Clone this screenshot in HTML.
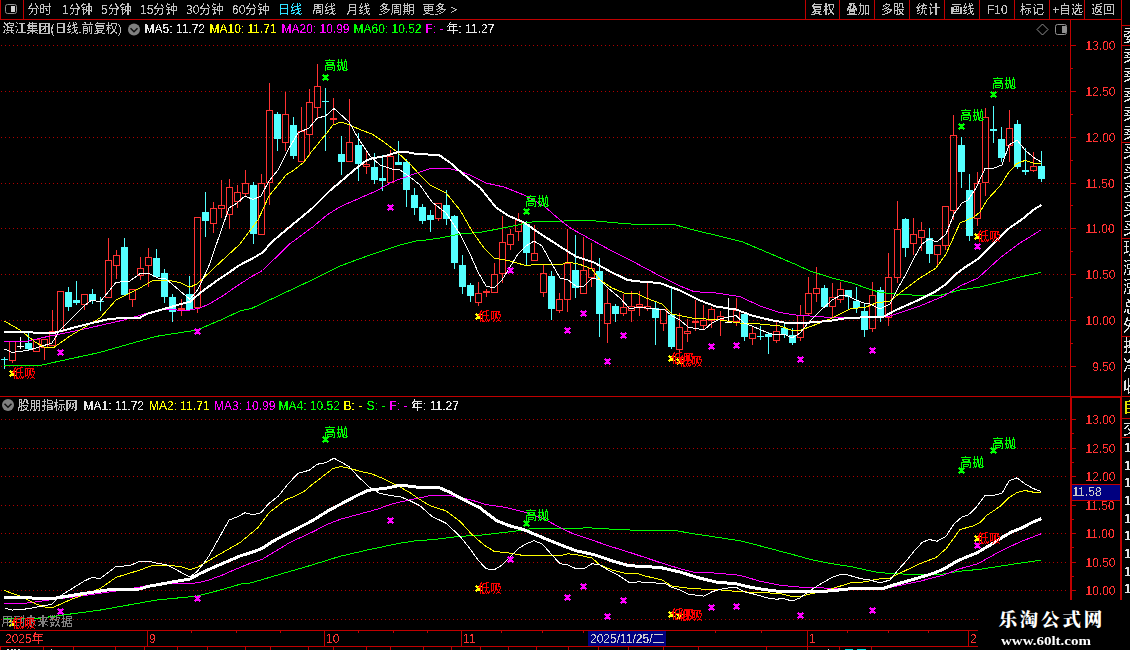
<!DOCTYPE html>
<html><head><meta charset="utf-8"><title>chart</title>
<style>
html,body{margin:0;padding:0;background:#000;}
body{width:1130px;height:650px;overflow:hidden;position:relative;font-family:"Liberation Sans","Noto Sans CJK SC",sans-serif;font-size:12px;}
.t{position:absolute;white-space:nowrap;line-height:15px;font-size:12px;}
.ax{left:1085.5px;color:#ff3232;}
svg{position:absolute;left:0;top:0;}
#sym{position:absolute;left:0;top:0;width:1130px;height:650px;filter:url(#thr2);}
#txt{position:absolute;left:0;top:0;width:1130px;height:650px;overflow:hidden;filter:url(#thr);}
#wm1{position:absolute;left:998.5px;top:606px;color:#fff;font-weight:900;font-size:18.5px;letter-spacing:2.8px;line-height:28px;font-family:"Liberation Serif","Noto Serif CJK SC",serif;white-space:nowrap;}
#wm2{position:absolute;left:1001px;top:632.5px;transform:scale(1,0.82);transform-origin:0 0;color:#fff;font-weight:bold;font-size:15px;line-height:20px;font-family:"Liberation Serif",serif;white-space:nowrap;}
#strip{position:absolute;left:1122px;top:19px;width:8px;height:631px;overflow:hidden;}
</style></head><body>
<svg width="1130" height="650" viewBox="0 0 1130 650" shape-rendering="crispEdges">
<line x1="1" y1="45.5" x2="1067" y2="45.5" stroke="#b00000" stroke-width="1" stroke-dasharray="1 3"/>
<line x1="1" y1="91.5" x2="1067" y2="91.5" stroke="#b00000" stroke-width="1" stroke-dasharray="1 3"/>
<line x1="1" y1="137.5" x2="1067" y2="137.5" stroke="#b00000" stroke-width="1" stroke-dasharray="1 3"/>
<line x1="1" y1="183.5" x2="1067" y2="183.5" stroke="#b00000" stroke-width="1" stroke-dasharray="1 3"/>
<line x1="1" y1="228.5" x2="1067" y2="228.5" stroke="#b00000" stroke-width="1" stroke-dasharray="1 3"/>
<line x1="1" y1="274.5" x2="1067" y2="274.5" stroke="#b00000" stroke-width="1" stroke-dasharray="1 3"/>
<line x1="1" y1="320.5" x2="1067" y2="320.5" stroke="#b00000" stroke-width="1" stroke-dasharray="1 3"/>
<line x1="1" y1="366.5" x2="1067" y2="366.5" stroke="#b00000" stroke-width="1" stroke-dasharray="1 3"/>
<line x1="1" y1="419.5" x2="1068" y2="419.5" stroke="#b00000" stroke-width="1" stroke-dasharray="1 3"/>
<line x1="1" y1="448.5" x2="1068" y2="448.5" stroke="#b00000" stroke-width="1" stroke-dasharray="1 3"/>
<line x1="1" y1="476.5" x2="1068" y2="476.5" stroke="#b00000" stroke-width="1" stroke-dasharray="1 3"/>
<line x1="1" y1="505.5" x2="1068" y2="505.5" stroke="#b00000" stroke-width="1" stroke-dasharray="1 3"/>
<line x1="1" y1="533.5" x2="1068" y2="533.5" stroke="#b00000" stroke-width="1" stroke-dasharray="1 3"/>
<line x1="1" y1="562.5" x2="1068" y2="562.5" stroke="#b00000" stroke-width="1" stroke-dasharray="1 3"/>
<line x1="1" y1="590.5" x2="1068" y2="590.5" stroke="#b00000" stroke-width="1" stroke-dasharray="1 3"/>
<line x1="1" y1="619.5" x2="978" y2="619.5" stroke="#b00000" stroke-width="1" stroke-dasharray="1 3"/>
<rect x="0" y="19" width="1122" height="1" fill="#c00000"/>
<rect x="0" y="0" width="1" height="20" fill="#c00000"/>
<rect x="23" y="0" width="1" height="20" fill="#c00000"/>
<rect x="805" y="0" width="1" height="19" fill="#c00000"/>
<rect x="839" y="0" width="1" height="19" fill="#c00000"/>
<rect x="874" y="0" width="1" height="19" fill="#c00000"/>
<rect x="909" y="0" width="1" height="19" fill="#c00000"/>
<rect x="944" y="0" width="1" height="19" fill="#c00000"/>
<rect x="979" y="0" width="1" height="19" fill="#c00000"/>
<rect x="1014" y="0" width="1" height="19" fill="#c00000"/>
<rect x="1049" y="0" width="1" height="19" fill="#c00000"/>
<rect x="1084" y="0" width="1" height="19" fill="#c00000"/>
<rect x="1121" y="0" width="1" height="397" fill="#c00000"/>
<rect x="1070" y="20" width="1" height="377" fill="#c00000"/>
<rect x="0" y="396" width="1130" height="1" fill="#c00000"/>
<rect x="1070" y="396" width="2" height="204" fill="#c00000"/>
<rect x="1120" y="396" width="2" height="204" fill="#c00000"/>
<rect x="1070" y="396" width="52" height="2" fill="#c00000"/>
<rect x="0" y="630" width="978" height="1" fill="#c00000"/>
<rect x="0" y="646" width="978" height="1" fill="#c00000"/>
<rect x="1071" y="45" width="5" height="1" fill="#c00000"/>
<rect x="1071" y="68" width="2" height="1" fill="#c00000"/>
<rect x="1071" y="91" width="5" height="1" fill="#c00000"/>
<rect x="1071" y="114" width="2" height="1" fill="#c00000"/>
<rect x="1071" y="137" width="5" height="1" fill="#c00000"/>
<rect x="1071" y="160" width="2" height="1" fill="#c00000"/>
<rect x="1071" y="183" width="5" height="1" fill="#c00000"/>
<rect x="1071" y="205" width="2" height="1" fill="#c00000"/>
<rect x="1071" y="228" width="5" height="1" fill="#c00000"/>
<rect x="1071" y="251" width="2" height="1" fill="#c00000"/>
<rect x="1071" y="274" width="5" height="1" fill="#c00000"/>
<rect x="1071" y="297" width="2" height="1" fill="#c00000"/>
<rect x="1071" y="320" width="5" height="1" fill="#c00000"/>
<rect x="1071" y="343" width="2" height="1" fill="#c00000"/>
<rect x="1071" y="366" width="5" height="1" fill="#c00000"/>
<rect x="1072" y="419" width="4" height="1" fill="#c00000"/>
<rect x="1072" y="433" width="2" height="1" fill="#c00000"/>
<rect x="1072" y="448" width="4" height="1" fill="#c00000"/>
<rect x="1072" y="462" width="2" height="1" fill="#c00000"/>
<rect x="1072" y="476" width="4" height="1" fill="#c00000"/>
<rect x="1072" y="490" width="2" height="1" fill="#c00000"/>
<rect x="1072" y="505" width="4" height="1" fill="#c00000"/>
<rect x="1072" y="519" width="2" height="1" fill="#c00000"/>
<rect x="1072" y="533" width="4" height="1" fill="#c00000"/>
<rect x="1072" y="547" width="2" height="1" fill="#c00000"/>
<rect x="1072" y="562" width="4" height="1" fill="#c00000"/>
<rect x="1072" y="576" width="2" height="1" fill="#c00000"/>
<rect x="1072" y="590" width="4" height="1" fill="#c00000"/>
<rect x="147" y="630" width="1" height="17" fill="#c00000"/>
<rect x="324" y="630" width="1" height="17" fill="#c00000"/>
<rect x="461" y="630" width="1" height="17" fill="#c00000"/>
<rect x="807" y="630" width="1" height="17" fill="#c00000"/>
<rect x="968" y="630" width="1" height="17" fill="#c00000"/>
<rect x="191" y="631" width="1" height="2" fill="#c00000"/>
<rect x="236" y="631" width="1" height="2" fill="#c00000"/>
<rect x="280" y="631" width="1" height="2" fill="#c00000"/>
<rect x="358" y="631" width="1" height="2" fill="#c00000"/>
<rect x="393" y="631" width="1" height="2" fill="#c00000"/>
<rect x="427" y="631" width="1" height="2" fill="#c00000"/>
<rect x="501" y="631" width="1" height="2" fill="#c00000"/>
<rect x="542" y="631" width="1" height="2" fill="#c00000"/>
<rect x="583" y="631" width="1" height="2" fill="#c00000"/>
<rect x="715" y="631" width="1" height="2" fill="#c00000"/>
<rect x="761" y="631" width="1" height="2" fill="#c00000"/>
<rect x="847" y="631" width="1" height="2" fill="#c00000"/>
<rect x="888" y="631" width="1" height="2" fill="#c00000"/>
<rect x="928" y="631" width="1" height="2" fill="#c00000"/>
<rect x="43" y="647" width="1" height="3" fill="#c00000"/>
<rect x="73" y="647" width="1" height="3" fill="#c00000"/>
<rect x="115" y="647" width="1" height="3" fill="#c00000"/>
<rect x="144" y="647" width="1" height="3" fill="#c00000"/>
<rect x="177" y="647" width="1" height="3" fill="#c00000"/>
<rect x="207" y="647" width="1" height="3" fill="#c00000"/>
<rect x="245" y="647" width="1" height="3" fill="#c00000"/>
<rect x="270" y="647" width="1" height="3" fill="#c00000"/>
<rect x="308" y="647" width="1" height="3" fill="#c00000"/>
<rect x="333" y="647" width="1" height="3" fill="#c00000"/>
<rect x="366" y="647" width="1" height="3" fill="#c00000"/>
<rect x="390" y="647" width="1" height="3" fill="#c00000"/>
<rect x="423" y="647" width="1" height="3" fill="#c00000"/>
<rect x="451" y="647" width="1" height="3" fill="#c00000"/>
<rect x="480" y="647" width="1" height="3" fill="#c00000"/>
<rect x="508" y="647" width="1" height="3" fill="#c00000"/>
<rect x="536" y="647" width="1" height="3" fill="#c00000"/>
<rect x="568" y="647" width="1" height="3" fill="#c00000"/>
<rect x="598" y="647" width="1" height="3" fill="#c00000"/>
<rect x="628" y="647" width="1" height="3" fill="#c00000"/>
<rect x="663" y="647" width="1" height="3" fill="#c00000"/>
<rect x="698" y="647" width="1" height="3" fill="#c00000"/>
<rect x="766" y="647" width="1" height="3" fill="#c00000"/>
<rect x="807" y="647" width="1" height="3" fill="#c00000"/>
<rect x="839" y="647" width="1" height="3" fill="#c00000"/>
<rect x="871" y="647" width="1" height="3" fill="#c00000"/>
<rect x="0" y="647" width="1" height="3" fill="#c00000"/>
<rect x="7" y="649" width="1" height="1" fill="#e0e0e0"/>
<rect x="8" y="649" width="1" height="1" fill="#e0e0e0"/>
<rect x="11" y="649" width="1" height="1" fill="#e0e0e0"/>
<rect x="12" y="649" width="1" height="1" fill="#e0e0e0"/>
<rect x="14" y="649" width="1" height="1" fill="#e0e0e0"/>
<rect x="15" y="649" width="1" height="1" fill="#e0e0e0"/>
<rect x="18" y="649" width="1" height="1" fill="#e0e0e0"/>
<rect x="19" y="649" width="1" height="1" fill="#e0e0e0"/>
<rect x="51" y="649" width="1" height="1" fill="#e0e0e0"/>
<rect x="828" y="649" width="1" height="1" fill="#e0e0e0"/>
<rect x="845" y="649" width="8" height="1" fill="#00e0e0"/>
<rect x="857" y="649" width="9" height="1" fill="#00e0e0"/>
<rect x="1122" y="25" width="8" height="1" fill="#c00000"/>
<rect x="1122" y="45" width="8" height="1" fill="#c00000"/>
<rect x="1122" y="142" width="8" height="1" fill="#c00000"/>
<rect x="1122" y="238" width="8" height="1" fill="#c00000"/>
<rect x="1122" y="336" width="8" height="1" fill="#c00000"/>
<rect x="1122" y="418" width="8" height="1" fill="#c00000"/>
<rect x="1122" y="437" width="8" height="1" fill="#c00000"/>
<rect x="4" y="357" width="1" height="12" fill="#54ffff"/>
<rect x="1" y="359" width="7" height="1" fill="#54ffff"/>
<rect x="12" y="361" width="1" height="2" fill="#ff3232"/>
<rect x="9.5" y="341.5" width="6" height="19" fill="none" stroke="#ff3232" stroke-width="1"/>
<rect x="20" y="337" width="1" height="12" fill="#ffffff"/>
<rect x="17" y="346" width="7" height="1" fill="#ffffff"/>
<rect x="28" y="333" width="1" height="17" fill="#54ffff"/>
<rect x="25" y="343" width="7" height="6" fill="#54ffff"/>
<rect x="33.5" y="339.5" width="6" height="12" fill="none" stroke="#ff3232" stroke-width="1"/>
<rect x="44" y="348" width="1" height="12" fill="#ff3232"/>
<rect x="41.5" y="339.5" width="6" height="8" fill="none" stroke="#ff3232" stroke-width="1"/>
<rect x="52" y="310" width="1" height="21" fill="#ff3232"/>
<rect x="49.5" y="331.5" width="6" height="14" fill="none" stroke="#ff3232" stroke-width="1"/>
<rect x="57.5" y="291.5" width="6" height="40" fill="none" stroke="#ff3232" stroke-width="1"/>
<rect x="68" y="287" width="1" height="24" fill="#54ffff"/>
<rect x="65" y="292" width="7" height="15" fill="#54ffff"/>
<rect x="76" y="281" width="1" height="24" fill="#54ffff"/>
<rect x="73" y="300" width="7" height="3" fill="#54ffff"/>
<rect x="84" y="305" width="1" height="5" fill="#ff3232"/>
<rect x="81.5" y="294.5" width="6" height="10" fill="none" stroke="#ff3232" stroke-width="1"/>
<rect x="92" y="289" width="1" height="15" fill="#54ffff"/>
<rect x="89" y="294" width="7" height="7" fill="#54ffff"/>
<rect x="100" y="297" width="1" height="14" fill="#54ffff"/>
<rect x="97" y="301" width="7" height="1" fill="#54ffff"/>
<rect x="108" y="238" width="1" height="22" fill="#ff3232"/>
<rect x="105.5" y="260.5" width="6" height="37" fill="none" stroke="#ff3232" stroke-width="1"/>
<rect x="116" y="250" width="1" height="5" fill="#ff3232"/>
<rect x="116" y="266" width="1" height="13" fill="#ff3232"/>
<rect x="113.5" y="255.5" width="6" height="10" fill="none" stroke="#ff3232" stroke-width="1"/>
<rect x="124" y="238" width="1" height="57" fill="#54ffff"/>
<rect x="121" y="247" width="7" height="48" fill="#54ffff"/>
<rect x="132" y="300" width="1" height="7" fill="#ff3232"/>
<rect x="129.5" y="289.5" width="6" height="10" fill="none" stroke="#ff3232" stroke-width="1"/>
<rect x="140" y="257" width="1" height="11" fill="#ff3232"/>
<rect x="140" y="276" width="1" height="4" fill="#ff3232"/>
<rect x="137.5" y="268.5" width="6" height="7" fill="none" stroke="#ff3232" stroke-width="1"/>
<rect x="148" y="248" width="1" height="9" fill="#ff3232"/>
<rect x="148" y="266" width="1" height="21" fill="#ff3232"/>
<rect x="145.5" y="257.5" width="6" height="8" fill="none" stroke="#ff3232" stroke-width="1"/>
<rect x="156" y="249" width="1" height="28" fill="#54ffff"/>
<rect x="153" y="258" width="7" height="19" fill="#54ffff"/>
<rect x="164" y="269" width="1" height="34" fill="#54ffff"/>
<rect x="161" y="273" width="7" height="24" fill="#54ffff"/>
<rect x="172" y="294" width="1" height="28" fill="#54ffff"/>
<rect x="169" y="297" width="7" height="15" fill="#54ffff"/>
<rect x="181" y="299" width="1" height="9" fill="#ff3232"/>
<rect x="181" y="310" width="1" height="6" fill="#ff3232"/>
<rect x="178" y="308" width="7" height="2" fill="#ff3232"/>
<rect x="189" y="276" width="1" height="34" fill="#54ffff"/>
<rect x="186" y="294" width="7" height="16" fill="#54ffff"/>
<rect x="197" y="308" width="1" height="5" fill="#ff3232"/>
<rect x="194.5" y="217.5" width="6" height="90" fill="none" stroke="#ff3232" stroke-width="1"/>
<rect x="205" y="192" width="1" height="45" fill="#54ffff"/>
<rect x="202" y="212" width="7" height="9" fill="#54ffff"/>
<rect x="213" y="202" width="1" height="6" fill="#ff3232"/>
<rect x="213" y="224" width="1" height="9" fill="#ff3232"/>
<rect x="210.5" y="208.5" width="6" height="15" fill="none" stroke="#ff3232" stroke-width="1"/>
<rect x="221" y="180" width="1" height="25" fill="#ff3232"/>
<rect x="221" y="209" width="1" height="9" fill="#ff3232"/>
<rect x="218.5" y="205.5" width="6" height="3" fill="none" stroke="#ff3232" stroke-width="1"/>
<rect x="229" y="179" width="1" height="8" fill="#ff3232"/>
<rect x="229" y="215" width="1" height="14" fill="#ff3232"/>
<rect x="226.5" y="187.5" width="6" height="27" fill="none" stroke="#ff3232" stroke-width="1"/>
<rect x="237" y="185" width="1" height="7" fill="#ff3232"/>
<rect x="237" y="202" width="1" height="6" fill="#ff3232"/>
<rect x="234.5" y="192.5" width="6" height="9" fill="none" stroke="#ff3232" stroke-width="1"/>
<rect x="245" y="170" width="1" height="13" fill="#ff3232"/>
<rect x="245" y="194" width="1" height="3" fill="#ff3232"/>
<rect x="242.5" y="183.5" width="6" height="10" fill="none" stroke="#ff3232" stroke-width="1"/>
<rect x="253" y="182" width="1" height="62" fill="#54ffff"/>
<rect x="250" y="185" width="7" height="49" fill="#54ffff"/>
<rect x="261" y="174" width="1" height="9" fill="#ff3232"/>
<rect x="258.5" y="183.5" width="6" height="51" fill="none" stroke="#ff3232" stroke-width="1"/>
<rect x="269" y="83" width="1" height="27" fill="#ff3232"/>
<rect x="269" y="183" width="1" height="22" fill="#ff3232"/>
<rect x="266.5" y="110.5" width="6" height="72" fill="none" stroke="#ff3232" stroke-width="1"/>
<rect x="277" y="112" width="1" height="39" fill="#54ffff"/>
<rect x="274" y="114" width="7" height="25" fill="#54ffff"/>
<rect x="285" y="92" width="1" height="22" fill="#ff3232"/>
<rect x="285" y="143" width="1" height="8" fill="#ff3232"/>
<rect x="282.5" y="114.5" width="6" height="28" fill="none" stroke="#ff3232" stroke-width="1"/>
<rect x="293" y="117" width="1" height="42" fill="#54ffff"/>
<rect x="290" y="125" width="7" height="31" fill="#54ffff"/>
<rect x="301" y="107" width="1" height="24" fill="#ff3232"/>
<rect x="298.5" y="131.5" width="6" height="30" fill="none" stroke="#ff3232" stroke-width="1"/>
<rect x="309" y="89" width="1" height="13" fill="#ff3232"/>
<rect x="309" y="135" width="1" height="21" fill="#ff3232"/>
<rect x="306.5" y="102.5" width="6" height="32" fill="none" stroke="#ff3232" stroke-width="1"/>
<rect x="317" y="64" width="1" height="22" fill="#ff3232"/>
<rect x="317" y="108" width="1" height="11" fill="#ff3232"/>
<rect x="314.5" y="86.5" width="6" height="21" fill="none" stroke="#ff3232" stroke-width="1"/>
<rect x="325" y="88" width="1" height="63" fill="#54ffff"/>
<rect x="322" y="101" width="7" height="1" fill="#54ffff"/>
<rect x="333" y="98" width="1" height="20" fill="#ff3232"/>
<rect x="333" y="120" width="1" height="4" fill="#ff3232"/>
<rect x="330" y="118" width="7" height="2" fill="#ff3232"/>
<rect x="341" y="136" width="1" height="39" fill="#54ffff"/>
<rect x="338" y="154" width="7" height="8" fill="#54ffff"/>
<rect x="349" y="99" width="1" height="43" fill="#ff3232"/>
<rect x="346.5" y="142.5" width="6" height="19" fill="none" stroke="#ff3232" stroke-width="1"/>
<rect x="358" y="133" width="1" height="48" fill="#54ffff"/>
<rect x="355" y="145" width="7" height="19" fill="#54ffff"/>
<rect x="366" y="152" width="1" height="12" fill="#ff3232"/>
<rect x="366" y="167" width="1" height="7" fill="#ff3232"/>
<rect x="363.5" y="164.5" width="6" height="2" fill="none" stroke="#ff3232" stroke-width="1"/>
<rect x="374" y="153" width="1" height="31" fill="#54ffff"/>
<rect x="371" y="167" width="7" height="13" fill="#54ffff"/>
<rect x="382" y="155" width="1" height="36" fill="#54ffff"/>
<rect x="379" y="178" width="7" height="3" fill="#54ffff"/>
<rect x="390" y="150" width="1" height="6" fill="#ff3232"/>
<rect x="387.5" y="156.5" width="6" height="26" fill="none" stroke="#ff3232" stroke-width="1"/>
<rect x="398" y="141" width="1" height="24" fill="#54ffff"/>
<rect x="395" y="162" width="7" height="3" fill="#54ffff"/>
<rect x="406" y="159" width="1" height="48" fill="#54ffff"/>
<rect x="403" y="162" width="7" height="28" fill="#54ffff"/>
<rect x="414" y="188" width="1" height="27" fill="#54ffff"/>
<rect x="411" y="195" width="7" height="13" fill="#54ffff"/>
<rect x="422" y="204" width="1" height="20" fill="#54ffff"/>
<rect x="419" y="207" width="7" height="14" fill="#54ffff"/>
<rect x="430" y="210" width="1" height="22" fill="#54ffff"/>
<rect x="427" y="215" width="7" height="5" fill="#54ffff"/>
<rect x="438" y="219" width="1" height="2" fill="#ff3232"/>
<rect x="435.5" y="203.5" width="6" height="15" fill="none" stroke="#ff3232" stroke-width="1"/>
<rect x="446" y="190" width="1" height="35" fill="#54ffff"/>
<rect x="443" y="205" width="7" height="14" fill="#54ffff"/>
<rect x="454" y="215" width="1" height="54" fill="#54ffff"/>
<rect x="451" y="216" width="7" height="47" fill="#54ffff"/>
<rect x="462" y="255" width="1" height="39" fill="#54ffff"/>
<rect x="459" y="265" width="7" height="22" fill="#54ffff"/>
<rect x="470" y="283" width="1" height="19" fill="#54ffff"/>
<rect x="467" y="285" width="7" height="11" fill="#54ffff"/>
<rect x="478" y="282" width="1" height="11" fill="#ff3232"/>
<rect x="478" y="303" width="1" height="3" fill="#ff3232"/>
<rect x="475.5" y="293.5" width="6" height="9" fill="none" stroke="#ff3232" stroke-width="1"/>
<rect x="486" y="289" width="1" height="2" fill="#ff3232"/>
<rect x="486" y="293" width="1" height="4" fill="#ff3232"/>
<rect x="483" y="291" width="7" height="2" fill="#ff3232"/>
<rect x="494" y="263" width="1" height="11" fill="#ff3232"/>
<rect x="491.5" y="274.5" width="6" height="18" fill="none" stroke="#ff3232" stroke-width="1"/>
<rect x="502" y="216" width="1" height="26" fill="#ff3232"/>
<rect x="502" y="274" width="1" height="9" fill="#ff3232"/>
<rect x="499.5" y="242.5" width="6" height="31" fill="none" stroke="#ff3232" stroke-width="1"/>
<rect x="510" y="229" width="1" height="5" fill="#ff3232"/>
<rect x="510" y="245" width="1" height="5" fill="#ff3232"/>
<rect x="507.5" y="234.5" width="6" height="10" fill="none" stroke="#ff3232" stroke-width="1"/>
<rect x="518" y="213" width="1" height="7" fill="#ff3232"/>
<rect x="518" y="232" width="1" height="9" fill="#ff3232"/>
<rect x="515.5" y="220.5" width="6" height="11" fill="none" stroke="#ff3232" stroke-width="1"/>
<rect x="526" y="221" width="1" height="44" fill="#54ffff"/>
<rect x="523" y="224" width="7" height="29" fill="#54ffff"/>
<rect x="534" y="225" width="1" height="28" fill="#ff3232"/>
<rect x="531.5" y="253.5" width="6" height="7" fill="none" stroke="#ff3232" stroke-width="1"/>
<rect x="543" y="264" width="1" height="9" fill="#ff3232"/>
<rect x="543" y="293" width="1" height="4" fill="#ff3232"/>
<rect x="540.5" y="273.5" width="6" height="19" fill="none" stroke="#ff3232" stroke-width="1"/>
<rect x="551" y="271" width="1" height="49" fill="#54ffff"/>
<rect x="548" y="276" width="7" height="33" fill="#54ffff"/>
<rect x="559" y="293" width="1" height="6" fill="#ff3232"/>
<rect x="559" y="311" width="1" height="2" fill="#ff3232"/>
<rect x="556.5" y="299.5" width="6" height="11" fill="none" stroke="#ff3232" stroke-width="1"/>
<rect x="567" y="229" width="1" height="34" fill="#ff3232"/>
<rect x="567" y="300" width="1" height="12" fill="#ff3232"/>
<rect x="564.5" y="263.5" width="6" height="36" fill="none" stroke="#ff3232" stroke-width="1"/>
<rect x="575" y="235" width="1" height="63" fill="#54ffff"/>
<rect x="572" y="270" width="7" height="18" fill="#54ffff"/>
<rect x="583" y="237" width="1" height="33" fill="#ff3232"/>
<rect x="580.5" y="270.5" width="6" height="23" fill="none" stroke="#ff3232" stroke-width="1"/>
<rect x="591" y="243" width="1" height="25" fill="#ff3232"/>
<rect x="591" y="278" width="1" height="9" fill="#ff3232"/>
<rect x="588.5" y="268.5" width="6" height="9" fill="none" stroke="#ff3232" stroke-width="1"/>
<rect x="599" y="258" width="1" height="79" fill="#54ffff"/>
<rect x="596" y="271" width="7" height="43" fill="#54ffff"/>
<rect x="607" y="289" width="1" height="14" fill="#ff3232"/>
<rect x="607" y="324" width="1" height="19" fill="#ff3232"/>
<rect x="604.5" y="303.5" width="6" height="20" fill="none" stroke="#ff3232" stroke-width="1"/>
<rect x="615" y="304" width="1" height="18" fill="#54ffff"/>
<rect x="612" y="306" width="7" height="8" fill="#54ffff"/>
<rect x="623" y="294" width="1" height="13" fill="#ff3232"/>
<rect x="623" y="314" width="1" height="2" fill="#ff3232"/>
<rect x="620.5" y="307.5" width="6" height="6" fill="none" stroke="#ff3232" stroke-width="1"/>
<rect x="631" y="291" width="1" height="15" fill="#ff3232"/>
<rect x="631" y="311" width="1" height="11" fill="#ff3232"/>
<rect x="628.5" y="306.5" width="6" height="4" fill="none" stroke="#ff3232" stroke-width="1"/>
<rect x="639" y="291" width="1" height="13" fill="#ff3232"/>
<rect x="639" y="307" width="1" height="9" fill="#ff3232"/>
<rect x="636.5" y="304.5" width="6" height="2" fill="none" stroke="#ff3232" stroke-width="1"/>
<rect x="647" y="281" width="1" height="25" fill="#ff3232"/>
<rect x="647" y="309" width="1" height="2" fill="#ff3232"/>
<rect x="644.5" y="306.5" width="6" height="2" fill="none" stroke="#ff3232" stroke-width="1"/>
<rect x="655" y="302" width="1" height="43" fill="#54ffff"/>
<rect x="652" y="308" width="7" height="10" fill="#54ffff"/>
<rect x="663" y="324" width="1" height="7" fill="#ff3232"/>
<rect x="660.5" y="309.5" width="6" height="14" fill="none" stroke="#ff3232" stroke-width="1"/>
<rect x="671" y="288" width="1" height="61" fill="#54ffff"/>
<rect x="668" y="315" width="7" height="32" fill="#54ffff"/>
<rect x="679" y="313" width="1" height="14" fill="#ff3232"/>
<rect x="679" y="350" width="1" height="3" fill="#ff3232"/>
<rect x="676.5" y="327.5" width="6" height="22" fill="none" stroke="#ff3232" stroke-width="1"/>
<rect x="687" y="319" width="1" height="12" fill="#ff3232"/>
<rect x="687" y="334" width="1" height="8" fill="#ff3232"/>
<rect x="684.5" y="331.5" width="6" height="2" fill="none" stroke="#ff3232" stroke-width="1"/>
<rect x="695" y="300" width="1" height="21" fill="#ff3232"/>
<rect x="695" y="323" width="1" height="8" fill="#ff3232"/>
<rect x="692" y="321" width="7" height="2" fill="#ff3232"/>
<rect x="703" y="305" width="1" height="15" fill="#ff3232"/>
<rect x="703" y="326" width="1" height="4" fill="#ff3232"/>
<rect x="700.5" y="320.5" width="6" height="5" fill="none" stroke="#ff3232" stroke-width="1"/>
<rect x="711" y="307" width="1" height="2" fill="#ff3232"/>
<rect x="711" y="321" width="1" height="7" fill="#ff3232"/>
<rect x="708.5" y="309.5" width="6" height="11" fill="none" stroke="#ff3232" stroke-width="1"/>
<rect x="720" y="311" width="1" height="5" fill="#ff3232"/>
<rect x="720" y="320" width="1" height="16" fill="#ff3232"/>
<rect x="717.5" y="316.5" width="6" height="3" fill="none" stroke="#ff3232" stroke-width="1"/>
<rect x="728" y="298" width="1" height="24" fill="#ffffff"/>
<rect x="725" y="322" width="7" height="1" fill="#ffffff"/>
<rect x="736" y="298" width="1" height="12" fill="#ff3232"/>
<rect x="736" y="322" width="1" height="4" fill="#ff3232"/>
<rect x="733.5" y="310.5" width="6" height="11" fill="none" stroke="#ff3232" stroke-width="1"/>
<rect x="744" y="313" width="1" height="28" fill="#54ffff"/>
<rect x="741" y="314" width="7" height="23" fill="#54ffff"/>
<rect x="752" y="327" width="1" height="6" fill="#ff3232"/>
<rect x="752" y="339" width="1" height="6" fill="#ff3232"/>
<rect x="749.5" y="333.5" width="6" height="5" fill="none" stroke="#ff3232" stroke-width="1"/>
<rect x="760" y="326" width="1" height="14" fill="#54ffff"/>
<rect x="757" y="336" width="7" height="1" fill="#54ffff"/>
<rect x="768" y="332" width="1" height="22" fill="#54ffff"/>
<rect x="765" y="334" width="7" height="3" fill="#54ffff"/>
<rect x="776" y="321" width="1" height="10" fill="#ff3232"/>
<rect x="776" y="341" width="1" height="2" fill="#ff3232"/>
<rect x="773.5" y="331.5" width="6" height="9" fill="none" stroke="#ff3232" stroke-width="1"/>
<rect x="784" y="323" width="1" height="15" fill="#54ffff"/>
<rect x="781" y="328" width="7" height="7" fill="#54ffff"/>
<rect x="792" y="328" width="1" height="17" fill="#54ffff"/>
<rect x="789" y="335" width="7" height="8" fill="#54ffff"/>
<rect x="800" y="305" width="1" height="10" fill="#ff3232"/>
<rect x="800" y="338" width="1" height="3" fill="#ff3232"/>
<rect x="797.5" y="315.5" width="6" height="22" fill="none" stroke="#ff3232" stroke-width="1"/>
<rect x="808" y="277" width="1" height="16" fill="#ff3232"/>
<rect x="808" y="314" width="1" height="1" fill="#ff3232"/>
<rect x="805.5" y="293.5" width="6" height="20" fill="none" stroke="#ff3232" stroke-width="1"/>
<rect x="816" y="267" width="1" height="21" fill="#ff3232"/>
<rect x="816" y="294" width="1" height="8" fill="#ff3232"/>
<rect x="813.5" y="288.5" width="6" height="5" fill="none" stroke="#ff3232" stroke-width="1"/>
<rect x="824" y="285" width="1" height="22" fill="#54ffff"/>
<rect x="821" y="288" width="7" height="19" fill="#54ffff"/>
<rect x="832" y="283" width="1" height="14" fill="#ff3232"/>
<rect x="832" y="307" width="1" height="11" fill="#ff3232"/>
<rect x="829.5" y="297.5" width="6" height="9" fill="none" stroke="#ff3232" stroke-width="1"/>
<rect x="840" y="282" width="1" height="7" fill="#ff3232"/>
<rect x="840" y="300" width="1" height="3" fill="#ff3232"/>
<rect x="837.5" y="289.5" width="6" height="10" fill="none" stroke="#ff3232" stroke-width="1"/>
<rect x="848" y="290" width="1" height="19" fill="#54ffff"/>
<rect x="845" y="290" width="7" height="7" fill="#54ffff"/>
<rect x="856" y="287" width="1" height="26" fill="#54ffff"/>
<rect x="853" y="301" width="7" height="7" fill="#54ffff"/>
<rect x="864" y="304" width="1" height="33" fill="#54ffff"/>
<rect x="861" y="311" width="7" height="19" fill="#54ffff"/>
<rect x="872" y="282" width="1" height="13" fill="#ff3232"/>
<rect x="872" y="329" width="1" height="3" fill="#ff3232"/>
<rect x="869.5" y="295.5" width="6" height="33" fill="none" stroke="#ff3232" stroke-width="1"/>
<rect x="880" y="287" width="1" height="35" fill="#54ffff"/>
<rect x="877" y="290" width="7" height="27" fill="#54ffff"/>
<rect x="888" y="253" width="1" height="24" fill="#ff3232"/>
<rect x="888" y="318" width="1" height="8" fill="#ff3232"/>
<rect x="885.5" y="277.5" width="6" height="40" fill="none" stroke="#ff3232" stroke-width="1"/>
<rect x="897" y="201" width="1" height="28" fill="#ff3232"/>
<rect x="897" y="278" width="1" height="5" fill="#ff3232"/>
<rect x="894.5" y="229.5" width="6" height="48" fill="none" stroke="#ff3232" stroke-width="1"/>
<rect x="905" y="218" width="1" height="39" fill="#54ffff"/>
<rect x="902" y="219" width="7" height="29" fill="#54ffff"/>
<rect x="913" y="218" width="1" height="16" fill="#ff3232"/>
<rect x="913" y="244" width="1" height="11" fill="#ff3232"/>
<rect x="910.5" y="234.5" width="6" height="9" fill="none" stroke="#ff3232" stroke-width="1"/>
<rect x="921" y="222" width="1" height="8" fill="#ff3232"/>
<rect x="921" y="238" width="1" height="13" fill="#ff3232"/>
<rect x="918.5" y="230.5" width="6" height="7" fill="none" stroke="#ff3232" stroke-width="1"/>
<rect x="929" y="228" width="1" height="35" fill="#54ffff"/>
<rect x="926" y="238" width="7" height="16" fill="#54ffff"/>
<rect x="937" y="255" width="1" height="12" fill="#ff3232"/>
<rect x="934.5" y="245.5" width="6" height="9" fill="none" stroke="#ff3232" stroke-width="1"/>
<rect x="945" y="246" width="1" height="4" fill="#ff3232"/>
<rect x="942.5" y="206.5" width="6" height="39" fill="none" stroke="#ff3232" stroke-width="1"/>
<rect x="953" y="115" width="1" height="20" fill="#ff3232"/>
<rect x="953" y="211" width="1" height="9" fill="#ff3232"/>
<rect x="950.5" y="135.5" width="6" height="75" fill="none" stroke="#ff3232" stroke-width="1"/>
<rect x="961" y="137" width="1" height="51" fill="#54ffff"/>
<rect x="958" y="145" width="7" height="27" fill="#54ffff"/>
<rect x="969" y="174" width="1" height="67" fill="#54ffff"/>
<rect x="966" y="190" width="7" height="46" fill="#54ffff"/>
<rect x="977" y="172" width="1" height="11" fill="#ff3232"/>
<rect x="977" y="219" width="1" height="7" fill="#ff3232"/>
<rect x="974.5" y="183.5" width="6" height="35" fill="none" stroke="#ff3232" stroke-width="1"/>
<rect x="985" y="108" width="1" height="9" fill="#ff3232"/>
<rect x="985" y="183" width="1" height="13" fill="#ff3232"/>
<rect x="982.5" y="117.5" width="6" height="65" fill="none" stroke="#ff3232" stroke-width="1"/>
<rect x="993" y="106" width="1" height="37" fill="#54ffff"/>
<rect x="990" y="129" width="7" height="2" fill="#54ffff"/>
<rect x="1001" y="127" width="1" height="35" fill="#54ffff"/>
<rect x="998" y="139" width="7" height="19" fill="#54ffff"/>
<rect x="1009" y="110" width="1" height="18" fill="#ff3232"/>
<rect x="1009" y="146" width="1" height="16" fill="#ff3232"/>
<rect x="1006.5" y="128.5" width="6" height="17" fill="none" stroke="#ff3232" stroke-width="1"/>
<rect x="1017" y="120" width="1" height="49" fill="#54ffff"/>
<rect x="1014" y="124" width="7" height="43" fill="#54ffff"/>
<rect x="1025" y="148" width="1" height="27" fill="#54ffff"/>
<rect x="1022" y="170" width="7" height="2" fill="#54ffff"/>
<rect x="1033" y="152" width="1" height="14" fill="#ff3232"/>
<rect x="1033" y="171" width="1" height="1" fill="#ff3232"/>
<rect x="1030.5" y="166.5" width="6" height="4" fill="none" stroke="#ff3232" stroke-width="1"/>
<rect x="1041" y="151" width="1" height="31" fill="#54ffff"/>
<rect x="1038" y="166" width="7" height="13" fill="#54ffff"/>
<polyline fill="none" stroke="#00ff00" stroke-width="1" stroke-linejoin="round" points="4.4,365.6 40.0,365.5 60.0,361.0 100.0,352.4 156.0,336.4 197.0,330.0 222.3,319.3 241.0,310.5 251.0,308.7 280.0,295.0 312.0,280.0 340.0,266.0 370.0,255.0 400.0,245.0 416.0,241.0 426.0,240.0 440.0,238.0 460.0,234.0 480.0,232.4 489.9,230.5 509.9,226.7 519.9,224.6 527.3,222.4 539.8,221.4 571.0,220.9 590.0,220.4 612.0,222.5 636.0,224.4 673.7,224.4 693.7,230.0 717.4,235.6 742.3,241.8 767.3,252.4 796.0,264.6 810.0,271.0 832.0,278.0 852.0,283.0 866.0,288.0 880.0,292.4 900.0,294.4 920.0,295.4 940.0,295.4 960.0,290.0 980.0,287.0 1000.0,282.0 1020.0,277.0 1041.0,272.4"/>
<polyline fill="none" stroke="#ff00ff" stroke-width="1" stroke-linejoin="round" points="4.4,341.4 26.0,341.4 50.0,336.0 80.0,330.0 124.0,320.0 148.0,313.0 165.0,309.3 177.4,310.0 189.9,310.0 199.8,308.0 209.8,303.7 222.3,296.2 234.8,287.5 251.0,276.9 262.5,270.5 290.0,243.7 313.0,226.8 327.0,215.0 340.0,206.8 352.0,201.5 377.0,190.6 392.4,181.8 409.9,175.5 429.8,168.7 449.8,168.7 459.8,171.2 471.0,175.5 486.0,183.0 504.0,187.0 524.0,195.0 544.0,206.0 560.0,220.0 572.0,229.0 592.0,240.0 610.0,250.0 630.0,260.0 646.0,268.5 660.0,276.0 680.0,286.0 694.0,291.6 716.0,293.0 740.0,296.6 760.0,306.0 780.0,312.6 800.0,315.6 820.0,316.4 830.0,318.0 848.0,317.6 860.0,318.0 890.0,316.0 920.0,306.0 944.0,296.0 960.0,286.0 978.0,278.0 1000.0,258.0 1020.0,243.0 1041.0,230.0"/>
<polyline fill="none" stroke="#ffff00" stroke-width="1" stroke-linejoin="round" points="4.4,321.0 20.0,330.0 36.0,342.6 46.0,348.0 54.0,347.4 70.0,336.0 100.0,318.0 116.0,300.0 140.0,288.0 152.4,280.6 166.2,280.0 179.9,282.5 189.9,287.2 197.4,283.7 207.3,274.4 217.3,265.0 240.0,244.0 258.0,220.0 269.0,196.0 286.0,175.0 294.0,170.0 304.0,162.0 312.0,151.0 326.0,134.0 333.0,125.0 341.0,122.0 350.0,125.0 360.0,129.6 372.0,134.0 384.0,142.0 397.0,152.0 410.0,164.0 420.0,175.0 430.0,185.0 446.0,193.0 460.0,210.0 472.0,231.0 484.0,248.0 494.0,258.0 510.0,261.0 526.0,265.6 540.0,264.0 560.0,265.0 568.0,262.0 580.0,264.4 592.0,269.0 600.0,280.0 612.0,288.0 624.0,293.0 638.0,294.0 646.0,298.0 662.0,304.0 672.0,314.0 692.0,318.0 720.0,320.0 740.0,323.0 760.0,324.0 780.0,326.0 792.0,330.4 800.0,330.4 812.0,326.0 830.0,319.0 850.0,309.0 866.0,307.0 876.0,303.0 890.0,301.0 900.0,293.0 920.0,278.0 936.0,268.0 946.0,254.0 960.0,223.0 974.0,217.0 980.0,212.0 987.0,200.0 1000.0,186.0 1009.0,172.0 1017.0,163.6 1025.0,160.4 1033.0,163.0 1041.0,164.0"/>
<polyline fill="none" stroke="#ffffff" stroke-width="1" stroke-linejoin="round" points="4.4,349.0 12.0,352.4 28.0,350.4 52.0,343.0 60.0,330.0 84.0,306.0 92.0,300.0 100.0,302.0 116.0,282.4 130.0,281.0 140.0,273.6 149.0,273.6 158.0,278.0 166.0,279.0 189.9,299.3 197.4,290.0 204.8,275.0 209.2,265.0 213.0,254.0 229.0,208.0 237.0,203.0 245.0,196.0 253.0,199.6 261.0,196.0 269.0,181.0 278.0,170.0 288.0,150.0 298.0,133.0 309.0,128.0 317.0,118.4 326.0,115.6 334.0,108.4 349.0,122.0 358.0,138.0 370.0,156.0 380.0,165.0 392.0,169.0 400.0,170.0 410.0,177.0 420.0,185.0 432.0,202.0 446.0,213.0 460.0,234.0 470.0,254.0 478.0,272.0 486.0,286.0 494.0,288.0 502.0,280.0 510.0,267.0 518.0,254.0 526.0,246.0 534.0,241.0 542.0,246.0 552.0,264.0 560.0,278.0 568.0,280.0 576.0,286.0 584.0,286.0 592.0,278.0 600.0,280.0 608.0,288.0 620.0,298.0 630.0,309.0 638.0,307.0 646.0,308.0 656.0,309.0 664.0,309.0 672.0,316.0 680.0,320.0 688.0,327.0 704.0,330.0 712.0,323.0 720.0,319.0 728.0,317.0 736.0,315.6 744.0,323.0 752.0,326.0 768.0,333.0 776.0,335.0 784.0,334.0 792.0,338.0 800.0,333.0 808.0,323.0 820.0,311.0 832.0,300.0 840.0,295.6 848.0,296.0 856.0,300.0 864.0,303.0 870.0,304.0 880.0,309.0 890.0,304.0 898.0,288.0 906.0,274.0 914.0,258.0 922.0,244.0 929.0,239.0 937.0,242.0 946.0,234.0 954.0,214.0 962.0,203.0 968.0,200.0 976.0,188.0 985.0,168.6 994.0,168.0 1002.0,165.0 1009.0,145.0 1017.0,140.0 1025.0,150.0 1033.0,157.0 1041.0,162.0"/>
<polyline fill="none" stroke="#ffffff" stroke-width="2" stroke-linejoin="round" points="4.4,331.5 28.0,331.5 36.0,333.1 54.0,332.9 80.0,326.0 110.0,318.7 140.0,317.7 147.4,313.7 164.9,308.7 179.9,304.3 189.9,301.8 199.8,293.1 216.1,281.2 229.8,271.9 239.8,265.0 252.5,258.5 262.5,252.5 272.4,241.5 286.0,230.0 312.0,208.5 330.0,190.5 342.5,180.0 355.0,169.3 366.2,160.6 373.7,158.0 384.9,156.2 398.6,151.8 407.4,152.2 417.4,154.3 438.6,154.7 449.8,162.4 459.8,171.2 471.0,180.5 480.0,187.5 496.0,207.5 508.0,215.5 524.0,222.5 540.0,233.5 560.0,246.5 576.0,256.5 594.0,262.5 612.0,272.5 628.0,280.1 640.0,281.5 660.0,283.1 680.0,290.5 700.0,300.5 716.0,306.5 736.0,309.5 752.0,315.5 770.0,319.9 784.0,322.5 810.0,322.5 830.0,320.9 850.0,317.5 860.0,317.5 884.0,316.5 895.0,310.5 917.4,300.5 934.9,291.8 944.9,284.9 954.9,274.9 964.9,267.4 977.3,259.3 989.8,247.5 1002.4,234.6 1010.4,227.2 1022.2,219.2 1033.4,209.9 1041.4,204.9"/>
<polyline fill="none" stroke="#00ff00" stroke-width="1" stroke-linejoin="round" points="4.4,618.3 40.0,618.2 60.0,615.4 100.0,610.1 156.0,600.1 197.0,596.1 222.3,589.5 241.0,584.0 251.0,582.9 280.0,574.3 312.0,565.0 340.0,556.3 370.0,549.4 400.0,543.2 416.0,540.7 426.0,540.1 440.0,538.8 460.0,536.3 480.0,535.3 489.9,534.1 509.9,531.8 519.9,530.5 527.3,529.1 539.8,528.5 571.0,528.2 590.0,527.9 612.0,529.2 636.0,530.3 673.7,530.3 693.7,533.8 717.4,537.3 742.3,541.2 767.3,547.8 796.0,555.4 810.0,559.4 832.0,563.7 852.0,566.8 866.0,570.0 880.0,572.7 900.0,573.9 920.0,574.6 940.0,574.6 960.0,571.2 980.0,569.3 1000.0,566.2 1020.0,563.1 1041.0,560.2"/>
<polyline fill="none" stroke="#ff00ff" stroke-width="1" stroke-linejoin="round" points="4.4,603.2 26.0,603.2 50.0,599.9 80.0,596.1 124.0,589.9 148.0,585.5 165.0,583.2 177.4,583.7 189.9,583.7 199.8,582.4 209.8,579.7 222.3,575.1 234.8,569.6 251.0,563.0 262.5,559.1 290.0,542.4 313.0,531.8 327.0,524.5 340.0,519.4 352.0,516.1 377.0,509.3 392.4,503.8 409.9,499.9 429.8,495.7 449.8,495.7 459.8,497.2 471.0,499.9 486.0,504.6 504.0,507.1 524.0,512.0 544.0,518.9 560.0,527.6 572.0,533.2 592.0,540.1 610.0,546.3 630.0,552.5 646.0,557.8 660.0,562.5 680.0,568.7 694.0,572.2 716.0,573.1 740.0,575.3 760.0,581.2 780.0,585.3 800.0,587.1 820.0,587.6 830.0,588.6 848.0,588.4 860.0,588.6 890.0,587.4 920.0,581.2 944.0,574.9 960.0,568.7 978.0,563.7 1000.0,551.3 1020.0,541.9 1041.0,533.8"/>
<polyline fill="none" stroke="#ffff00" stroke-width="1" stroke-linejoin="round" points="4.4,590.5 20.0,596.1 36.0,604.0 46.0,607.3 54.0,607.0 70.0,599.9 100.0,588.6 116.0,577.4 140.0,570.0 152.4,565.4 166.2,565.0 179.9,566.5 189.9,569.5 197.4,567.3 207.3,561.5 217.3,555.6 240.0,542.6 258.0,527.6 269.0,512.7 286.0,499.6 294.0,496.5 304.0,491.5 312.0,484.6 326.0,474.0 333.0,468.4 341.0,466.6 350.0,468.4 360.0,471.3 372.0,474.0 384.0,479.0 397.0,485.3 410.0,492.7 420.0,499.6 430.0,505.8 446.0,510.8 460.0,521.4 472.0,534.5 484.0,545.0 494.0,551.3 510.0,553.1 526.0,556.0 540.0,555.0 560.0,555.6 568.0,553.8 580.0,555.3 592.0,558.1 600.0,565.0 612.0,570.0 624.0,573.1 638.0,573.7 646.0,576.2 662.0,579.9 672.0,586.2 692.0,588.6 720.0,589.9 740.0,591.8 760.0,592.4 780.0,593.6 792.0,596.4 800.0,596.4 812.0,593.6 830.0,589.3 850.0,583.0 866.0,581.8 876.0,579.3 890.0,578.1 900.0,573.1 920.0,563.7 936.0,557.5 946.0,548.8 960.0,529.5 974.0,525.7 980.0,522.6 987.0,515.2 1000.0,506.4 1009.0,497.7 1017.0,492.5 1025.0,490.5 1033.0,492.1 1041.0,492.7"/>
<polyline fill="none" stroke="#ffffff" stroke-width="1" stroke-linejoin="round" points="4.4,607.9 12.0,610.1 28.0,608.8 52.0,604.2 60.0,596.1 84.0,581.2 92.0,577.4 100.0,578.7 116.0,566.5 130.0,565.6 140.0,561.0 149.0,561.0 158.0,563.7 166.0,564.4 189.9,577.0 197.4,571.2 204.8,561.9 209.2,555.6 213.0,548.8 229.0,520.1 237.0,517.0 245.0,512.7 253.0,514.9 261.0,512.7 269.0,503.3 278.0,496.5 288.0,484.0 298.0,473.4 309.0,470.3 317.0,464.3 326.0,462.6 334.0,458.1 349.0,466.6 358.0,476.5 370.0,487.7 380.0,493.4 392.0,495.8 400.0,496.5 410.0,500.8 420.0,505.8 432.0,516.4 446.0,523.2 460.0,536.3 470.0,548.8 478.0,560.0 486.0,568.7 494.0,570.0 502.0,565.0 510.0,556.9 518.0,548.8 526.0,543.8 534.0,540.7 542.0,543.8 552.0,555.0 560.0,563.7 568.0,565.0 576.0,568.7 584.0,568.7 592.0,563.7 600.0,565.0 608.0,570.0 620.0,576.2 630.0,583.0 638.0,581.8 646.0,582.4 656.0,583.0 664.0,583.0 672.0,587.4 680.0,589.9 688.0,594.2 704.0,596.1 712.0,591.8 720.0,589.3 728.0,588.0 736.0,587.1 744.0,591.8 752.0,593.6 768.0,598.0 776.0,599.2 784.0,598.6 792.0,601.1 800.0,598.0 808.0,591.8 820.0,584.3 832.0,577.4 840.0,574.7 848.0,574.9 856.0,577.4 864.0,579.3 870.0,579.9 880.0,583.0 890.0,579.9 898.0,570.0 906.0,561.2 914.0,551.3 922.0,542.6 929.0,539.4 937.0,541.3 946.0,536.3 954.0,523.9 962.0,517.0 968.0,515.2 976.0,507.7 985.0,495.6 994.0,495.2 1002.0,493.4 1009.0,480.9 1017.0,477.8 1025.0,484.0 1033.0,488.4 1041.0,491.5"/>
<polyline fill="none" stroke="#ffffff" stroke-width="3" stroke-linejoin="round" points="4.4,597.6 28.0,597.6 36.0,598.5 54.0,598.4 80.0,594.1 110.0,589.6 140.0,589.0 147.4,586.5 164.9,583.4 179.9,580.6 189.9,579.1 199.8,573.6 216.1,566.2 229.8,560.4 239.8,556.1 252.5,552.1 262.5,548.3 272.4,541.5 286.0,534.3 312.0,520.9 330.0,509.7 342.5,503.2 355.0,496.5 366.2,491.1 373.7,489.5 384.9,488.4 398.6,485.6 407.4,485.9 417.4,487.2 438.6,487.4 449.8,492.2 459.8,497.7 471.0,503.5 480.0,507.9 496.0,520.3 508.0,525.3 524.0,529.7 540.0,536.5 560.0,544.6 576.0,550.8 594.0,554.6 612.0,560.8 628.0,565.5 640.0,566.4 660.0,567.4 680.0,572.0 700.0,578.2 716.0,582.0 736.0,583.8 752.0,587.6 770.0,590.3 784.0,591.9 810.0,591.9 830.0,590.9 850.0,588.8 860.0,588.8 884.0,588.2 895.0,584.5 917.4,578.2 934.9,572.8 944.9,568.5 954.9,562.3 964.9,557.6 977.3,552.6 989.8,545.2 1002.4,537.2 1010.4,532.6 1022.2,527.6 1033.4,521.8 1041.4,518.7"/>
<rect x="58" y="349" width="1" height="1" fill="#ff00ff"/>
<rect x="62" y="349" width="1" height="1" fill="#ff00ff"/>
<rect x="57" y="350" width="7" height="1" fill="#ff00ff"/>
<rect x="58" y="351" width="5" height="1" fill="#ff00ff"/>
<rect x="59" y="352" width="3" height="1" fill="#ff00ff"/>
<rect x="58" y="353" width="5" height="1" fill="#ff00ff"/>
<rect x="57" y="354" width="7" height="1" fill="#ff00ff"/>
<rect x="58" y="355" width="1" height="1" fill="#ff00ff"/>
<rect x="62" y="355" width="1" height="1" fill="#ff00ff"/>
<rect x="58" y="608" width="1" height="1" fill="#ff00ff"/>
<rect x="62" y="608" width="1" height="1" fill="#ff00ff"/>
<rect x="57" y="609" width="7" height="1" fill="#ff00ff"/>
<rect x="58" y="610" width="5" height="1" fill="#ff00ff"/>
<rect x="59" y="611" width="3" height="1" fill="#ff00ff"/>
<rect x="58" y="612" width="5" height="1" fill="#ff00ff"/>
<rect x="57" y="613" width="7" height="1" fill="#ff00ff"/>
<rect x="58" y="614" width="1" height="1" fill="#ff00ff"/>
<rect x="62" y="614" width="1" height="1" fill="#ff00ff"/>
<rect x="195" y="328" width="1" height="1" fill="#ff00ff"/>
<rect x="199" y="328" width="1" height="1" fill="#ff00ff"/>
<rect x="194" y="329" width="7" height="1" fill="#ff00ff"/>
<rect x="195" y="330" width="5" height="1" fill="#ff00ff"/>
<rect x="196" y="331" width="3" height="1" fill="#ff00ff"/>
<rect x="195" y="332" width="5" height="1" fill="#ff00ff"/>
<rect x="194" y="333" width="7" height="1" fill="#ff00ff"/>
<rect x="195" y="334" width="1" height="1" fill="#ff00ff"/>
<rect x="199" y="334" width="1" height="1" fill="#ff00ff"/>
<rect x="195" y="595" width="1" height="1" fill="#ff00ff"/>
<rect x="199" y="595" width="1" height="1" fill="#ff00ff"/>
<rect x="194" y="596" width="7" height="1" fill="#ff00ff"/>
<rect x="195" y="597" width="5" height="1" fill="#ff00ff"/>
<rect x="196" y="598" width="3" height="1" fill="#ff00ff"/>
<rect x="195" y="599" width="5" height="1" fill="#ff00ff"/>
<rect x="194" y="600" width="7" height="1" fill="#ff00ff"/>
<rect x="195" y="601" width="1" height="1" fill="#ff00ff"/>
<rect x="199" y="601" width="1" height="1" fill="#ff00ff"/>
<rect x="388" y="204" width="1" height="1" fill="#ff00ff"/>
<rect x="392" y="204" width="1" height="1" fill="#ff00ff"/>
<rect x="387" y="205" width="7" height="1" fill="#ff00ff"/>
<rect x="388" y="206" width="5" height="1" fill="#ff00ff"/>
<rect x="389" y="207" width="3" height="1" fill="#ff00ff"/>
<rect x="388" y="208" width="5" height="1" fill="#ff00ff"/>
<rect x="387" y="209" width="7" height="1" fill="#ff00ff"/>
<rect x="388" y="210" width="1" height="1" fill="#ff00ff"/>
<rect x="392" y="210" width="1" height="1" fill="#ff00ff"/>
<rect x="388" y="517" width="1" height="1" fill="#ff00ff"/>
<rect x="392" y="517" width="1" height="1" fill="#ff00ff"/>
<rect x="387" y="518" width="7" height="1" fill="#ff00ff"/>
<rect x="388" y="519" width="5" height="1" fill="#ff00ff"/>
<rect x="389" y="520" width="3" height="1" fill="#ff00ff"/>
<rect x="388" y="521" width="5" height="1" fill="#ff00ff"/>
<rect x="387" y="522" width="7" height="1" fill="#ff00ff"/>
<rect x="388" y="523" width="1" height="1" fill="#ff00ff"/>
<rect x="392" y="523" width="1" height="1" fill="#ff00ff"/>
<rect x="508" y="267" width="1" height="1" fill="#ff00ff"/>
<rect x="512" y="267" width="1" height="1" fill="#ff00ff"/>
<rect x="507" y="268" width="7" height="1" fill="#ff00ff"/>
<rect x="508" y="269" width="5" height="1" fill="#ff00ff"/>
<rect x="509" y="270" width="3" height="1" fill="#ff00ff"/>
<rect x="508" y="271" width="5" height="1" fill="#ff00ff"/>
<rect x="507" y="272" width="7" height="1" fill="#ff00ff"/>
<rect x="508" y="273" width="1" height="1" fill="#ff00ff"/>
<rect x="512" y="273" width="1" height="1" fill="#ff00ff"/>
<rect x="508" y="556" width="1" height="1" fill="#ff00ff"/>
<rect x="512" y="556" width="1" height="1" fill="#ff00ff"/>
<rect x="507" y="557" width="7" height="1" fill="#ff00ff"/>
<rect x="508" y="558" width="5" height="1" fill="#ff00ff"/>
<rect x="509" y="559" width="3" height="1" fill="#ff00ff"/>
<rect x="508" y="560" width="5" height="1" fill="#ff00ff"/>
<rect x="507" y="561" width="7" height="1" fill="#ff00ff"/>
<rect x="508" y="562" width="1" height="1" fill="#ff00ff"/>
<rect x="512" y="562" width="1" height="1" fill="#ff00ff"/>
<rect x="581" y="310" width="1" height="1" fill="#ff00ff"/>
<rect x="585" y="310" width="1" height="1" fill="#ff00ff"/>
<rect x="580" y="311" width="7" height="1" fill="#ff00ff"/>
<rect x="581" y="312" width="5" height="1" fill="#ff00ff"/>
<rect x="582" y="313" width="3" height="1" fill="#ff00ff"/>
<rect x="581" y="314" width="5" height="1" fill="#ff00ff"/>
<rect x="580" y="315" width="7" height="1" fill="#ff00ff"/>
<rect x="581" y="316" width="1" height="1" fill="#ff00ff"/>
<rect x="585" y="316" width="1" height="1" fill="#ff00ff"/>
<rect x="581" y="583" width="1" height="1" fill="#ff00ff"/>
<rect x="585" y="583" width="1" height="1" fill="#ff00ff"/>
<rect x="580" y="584" width="7" height="1" fill="#ff00ff"/>
<rect x="581" y="585" width="5" height="1" fill="#ff00ff"/>
<rect x="582" y="586" width="3" height="1" fill="#ff00ff"/>
<rect x="581" y="587" width="5" height="1" fill="#ff00ff"/>
<rect x="580" y="588" width="7" height="1" fill="#ff00ff"/>
<rect x="581" y="589" width="1" height="1" fill="#ff00ff"/>
<rect x="585" y="589" width="1" height="1" fill="#ff00ff"/>
<rect x="565" y="327" width="1" height="1" fill="#ff00ff"/>
<rect x="569" y="327" width="1" height="1" fill="#ff00ff"/>
<rect x="564" y="328" width="7" height="1" fill="#ff00ff"/>
<rect x="565" y="329" width="5" height="1" fill="#ff00ff"/>
<rect x="566" y="330" width="3" height="1" fill="#ff00ff"/>
<rect x="565" y="331" width="5" height="1" fill="#ff00ff"/>
<rect x="564" y="332" width="7" height="1" fill="#ff00ff"/>
<rect x="565" y="333" width="1" height="1" fill="#ff00ff"/>
<rect x="569" y="333" width="1" height="1" fill="#ff00ff"/>
<rect x="565" y="594" width="1" height="1" fill="#ff00ff"/>
<rect x="569" y="594" width="1" height="1" fill="#ff00ff"/>
<rect x="564" y="595" width="7" height="1" fill="#ff00ff"/>
<rect x="565" y="596" width="5" height="1" fill="#ff00ff"/>
<rect x="566" y="597" width="3" height="1" fill="#ff00ff"/>
<rect x="565" y="598" width="5" height="1" fill="#ff00ff"/>
<rect x="564" y="599" width="7" height="1" fill="#ff00ff"/>
<rect x="565" y="600" width="1" height="1" fill="#ff00ff"/>
<rect x="569" y="600" width="1" height="1" fill="#ff00ff"/>
<rect x="621" y="332" width="1" height="1" fill="#ff00ff"/>
<rect x="625" y="332" width="1" height="1" fill="#ff00ff"/>
<rect x="620" y="333" width="7" height="1" fill="#ff00ff"/>
<rect x="621" y="334" width="5" height="1" fill="#ff00ff"/>
<rect x="622" y="335" width="3" height="1" fill="#ff00ff"/>
<rect x="621" y="336" width="5" height="1" fill="#ff00ff"/>
<rect x="620" y="337" width="7" height="1" fill="#ff00ff"/>
<rect x="621" y="338" width="1" height="1" fill="#ff00ff"/>
<rect x="625" y="338" width="1" height="1" fill="#ff00ff"/>
<rect x="621" y="597" width="1" height="1" fill="#ff00ff"/>
<rect x="625" y="597" width="1" height="1" fill="#ff00ff"/>
<rect x="620" y="598" width="7" height="1" fill="#ff00ff"/>
<rect x="621" y="599" width="5" height="1" fill="#ff00ff"/>
<rect x="622" y="600" width="3" height="1" fill="#ff00ff"/>
<rect x="621" y="601" width="5" height="1" fill="#ff00ff"/>
<rect x="620" y="602" width="7" height="1" fill="#ff00ff"/>
<rect x="621" y="603" width="1" height="1" fill="#ff00ff"/>
<rect x="625" y="603" width="1" height="1" fill="#ff00ff"/>
<rect x="605" y="358" width="1" height="1" fill="#ff00ff"/>
<rect x="609" y="358" width="1" height="1" fill="#ff00ff"/>
<rect x="604" y="359" width="7" height="1" fill="#ff00ff"/>
<rect x="605" y="360" width="5" height="1" fill="#ff00ff"/>
<rect x="606" y="361" width="3" height="1" fill="#ff00ff"/>
<rect x="605" y="362" width="5" height="1" fill="#ff00ff"/>
<rect x="604" y="363" width="7" height="1" fill="#ff00ff"/>
<rect x="605" y="364" width="1" height="1" fill="#ff00ff"/>
<rect x="609" y="364" width="1" height="1" fill="#ff00ff"/>
<rect x="605" y="613" width="1" height="1" fill="#ff00ff"/>
<rect x="609" y="613" width="1" height="1" fill="#ff00ff"/>
<rect x="604" y="614" width="7" height="1" fill="#ff00ff"/>
<rect x="605" y="615" width="5" height="1" fill="#ff00ff"/>
<rect x="606" y="616" width="3" height="1" fill="#ff00ff"/>
<rect x="605" y="617" width="5" height="1" fill="#ff00ff"/>
<rect x="604" y="618" width="7" height="1" fill="#ff00ff"/>
<rect x="605" y="619" width="1" height="1" fill="#ff00ff"/>
<rect x="609" y="619" width="1" height="1" fill="#ff00ff"/>
<rect x="709" y="343" width="1" height="1" fill="#ff00ff"/>
<rect x="713" y="343" width="1" height="1" fill="#ff00ff"/>
<rect x="708" y="344" width="7" height="1" fill="#ff00ff"/>
<rect x="709" y="345" width="5" height="1" fill="#ff00ff"/>
<rect x="710" y="346" width="3" height="1" fill="#ff00ff"/>
<rect x="709" y="347" width="5" height="1" fill="#ff00ff"/>
<rect x="708" y="348" width="7" height="1" fill="#ff00ff"/>
<rect x="709" y="349" width="1" height="1" fill="#ff00ff"/>
<rect x="713" y="349" width="1" height="1" fill="#ff00ff"/>
<rect x="709" y="604" width="1" height="1" fill="#ff00ff"/>
<rect x="713" y="604" width="1" height="1" fill="#ff00ff"/>
<rect x="708" y="605" width="7" height="1" fill="#ff00ff"/>
<rect x="709" y="606" width="5" height="1" fill="#ff00ff"/>
<rect x="710" y="607" width="3" height="1" fill="#ff00ff"/>
<rect x="709" y="608" width="5" height="1" fill="#ff00ff"/>
<rect x="708" y="609" width="7" height="1" fill="#ff00ff"/>
<rect x="709" y="610" width="1" height="1" fill="#ff00ff"/>
<rect x="713" y="610" width="1" height="1" fill="#ff00ff"/>
<rect x="734" y="342" width="1" height="1" fill="#ff00ff"/>
<rect x="738" y="342" width="1" height="1" fill="#ff00ff"/>
<rect x="733" y="343" width="7" height="1" fill="#ff00ff"/>
<rect x="734" y="344" width="5" height="1" fill="#ff00ff"/>
<rect x="735" y="345" width="3" height="1" fill="#ff00ff"/>
<rect x="734" y="346" width="5" height="1" fill="#ff00ff"/>
<rect x="733" y="347" width="7" height="1" fill="#ff00ff"/>
<rect x="734" y="348" width="1" height="1" fill="#ff00ff"/>
<rect x="738" y="348" width="1" height="1" fill="#ff00ff"/>
<rect x="734" y="603" width="1" height="1" fill="#ff00ff"/>
<rect x="738" y="603" width="1" height="1" fill="#ff00ff"/>
<rect x="733" y="604" width="7" height="1" fill="#ff00ff"/>
<rect x="734" y="605" width="5" height="1" fill="#ff00ff"/>
<rect x="735" y="606" width="3" height="1" fill="#ff00ff"/>
<rect x="734" y="607" width="5" height="1" fill="#ff00ff"/>
<rect x="733" y="608" width="7" height="1" fill="#ff00ff"/>
<rect x="734" y="609" width="1" height="1" fill="#ff00ff"/>
<rect x="738" y="609" width="1" height="1" fill="#ff00ff"/>
<rect x="798" y="356" width="1" height="1" fill="#ff00ff"/>
<rect x="802" y="356" width="1" height="1" fill="#ff00ff"/>
<rect x="797" y="357" width="7" height="1" fill="#ff00ff"/>
<rect x="798" y="358" width="5" height="1" fill="#ff00ff"/>
<rect x="799" y="359" width="3" height="1" fill="#ff00ff"/>
<rect x="798" y="360" width="5" height="1" fill="#ff00ff"/>
<rect x="797" y="361" width="7" height="1" fill="#ff00ff"/>
<rect x="798" y="362" width="1" height="1" fill="#ff00ff"/>
<rect x="802" y="362" width="1" height="1" fill="#ff00ff"/>
<rect x="798" y="612" width="1" height="1" fill="#ff00ff"/>
<rect x="802" y="612" width="1" height="1" fill="#ff00ff"/>
<rect x="797" y="613" width="7" height="1" fill="#ff00ff"/>
<rect x="798" y="614" width="5" height="1" fill="#ff00ff"/>
<rect x="799" y="615" width="3" height="1" fill="#ff00ff"/>
<rect x="798" y="616" width="5" height="1" fill="#ff00ff"/>
<rect x="797" y="617" width="7" height="1" fill="#ff00ff"/>
<rect x="798" y="618" width="1" height="1" fill="#ff00ff"/>
<rect x="802" y="618" width="1" height="1" fill="#ff00ff"/>
<rect x="975" y="243" width="1" height="1" fill="#ff00ff"/>
<rect x="979" y="243" width="1" height="1" fill="#ff00ff"/>
<rect x="974" y="244" width="7" height="1" fill="#ff00ff"/>
<rect x="975" y="245" width="5" height="1" fill="#ff00ff"/>
<rect x="976" y="246" width="3" height="1" fill="#ff00ff"/>
<rect x="975" y="247" width="5" height="1" fill="#ff00ff"/>
<rect x="974" y="248" width="7" height="1" fill="#ff00ff"/>
<rect x="975" y="249" width="1" height="1" fill="#ff00ff"/>
<rect x="979" y="249" width="1" height="1" fill="#ff00ff"/>
<rect x="975" y="542" width="1" height="1" fill="#ff00ff"/>
<rect x="979" y="542" width="1" height="1" fill="#ff00ff"/>
<rect x="974" y="543" width="7" height="1" fill="#ff00ff"/>
<rect x="975" y="544" width="5" height="1" fill="#ff00ff"/>
<rect x="976" y="545" width="3" height="1" fill="#ff00ff"/>
<rect x="975" y="546" width="5" height="1" fill="#ff00ff"/>
<rect x="974" y="547" width="7" height="1" fill="#ff00ff"/>
<rect x="975" y="548" width="1" height="1" fill="#ff00ff"/>
<rect x="979" y="548" width="1" height="1" fill="#ff00ff"/>
<rect x="870" y="347" width="1" height="1" fill="#ff00ff"/>
<rect x="874" y="347" width="1" height="1" fill="#ff00ff"/>
<rect x="869" y="348" width="7" height="1" fill="#ff00ff"/>
<rect x="870" y="349" width="5" height="1" fill="#ff00ff"/>
<rect x="871" y="350" width="3" height="1" fill="#ff00ff"/>
<rect x="870" y="351" width="5" height="1" fill="#ff00ff"/>
<rect x="869" y="352" width="7" height="1" fill="#ff00ff"/>
<rect x="870" y="353" width="1" height="1" fill="#ff00ff"/>
<rect x="874" y="353" width="1" height="1" fill="#ff00ff"/>
<rect x="870" y="607" width="1" height="1" fill="#ff00ff"/>
<rect x="874" y="607" width="1" height="1" fill="#ff00ff"/>
<rect x="869" y="608" width="7" height="1" fill="#ff00ff"/>
<rect x="870" y="609" width="5" height="1" fill="#ff00ff"/>
<rect x="871" y="610" width="3" height="1" fill="#ff00ff"/>
<rect x="870" y="611" width="5" height="1" fill="#ff00ff"/>
<rect x="869" y="612" width="7" height="1" fill="#ff00ff"/>
<rect x="870" y="613" width="1" height="1" fill="#ff00ff"/>
<rect x="874" y="613" width="1" height="1" fill="#ff00ff"/>
<rect x="10" y="370" width="1" height="1" fill="#ffff00"/>
<rect x="14" y="370" width="1" height="1" fill="#ffff00"/>
<rect x="9" y="371" width="7" height="1" fill="#ffff00"/>
<rect x="10" y="372" width="5" height="1" fill="#ffff00"/>
<rect x="11" y="373" width="3" height="1" fill="#ffff00"/>
<rect x="10" y="374" width="5" height="1" fill="#ffff00"/>
<rect x="9" y="375" width="7" height="1" fill="#ffff00"/>
<rect x="10" y="376" width="1" height="1" fill="#ffff00"/>
<rect x="14" y="376" width="1" height="1" fill="#ffff00"/>
<rect x="10" y="620" width="1" height="1" fill="#ffff00"/>
<rect x="14" y="620" width="1" height="1" fill="#ffff00"/>
<rect x="9" y="621" width="7" height="1" fill="#ffff00"/>
<rect x="10" y="622" width="5" height="1" fill="#ffff00"/>
<rect x="11" y="623" width="3" height="1" fill="#ffff00"/>
<rect x="10" y="624" width="5" height="1" fill="#ffff00"/>
<rect x="9" y="625" width="7" height="1" fill="#ffff00"/>
<rect x="10" y="626" width="1" height="1" fill="#ffff00"/>
<rect x="14" y="626" width="1" height="1" fill="#ffff00"/>
<rect x="476" y="313" width="1" height="1" fill="#ffff00"/>
<rect x="480" y="313" width="1" height="1" fill="#ffff00"/>
<rect x="475" y="314" width="7" height="1" fill="#ffff00"/>
<rect x="476" y="315" width="5" height="1" fill="#ffff00"/>
<rect x="477" y="316" width="3" height="1" fill="#ffff00"/>
<rect x="476" y="317" width="5" height="1" fill="#ffff00"/>
<rect x="475" y="318" width="7" height="1" fill="#ffff00"/>
<rect x="476" y="319" width="1" height="1" fill="#ffff00"/>
<rect x="480" y="319" width="1" height="1" fill="#ffff00"/>
<rect x="476" y="585" width="1" height="1" fill="#ffff00"/>
<rect x="480" y="585" width="1" height="1" fill="#ffff00"/>
<rect x="475" y="586" width="7" height="1" fill="#ffff00"/>
<rect x="476" y="587" width="5" height="1" fill="#ffff00"/>
<rect x="477" y="588" width="3" height="1" fill="#ffff00"/>
<rect x="476" y="589" width="5" height="1" fill="#ffff00"/>
<rect x="475" y="590" width="7" height="1" fill="#ffff00"/>
<rect x="476" y="591" width="1" height="1" fill="#ffff00"/>
<rect x="480" y="591" width="1" height="1" fill="#ffff00"/>
<rect x="669" y="355" width="1" height="1" fill="#ffff00"/>
<rect x="673" y="355" width="1" height="1" fill="#ffff00"/>
<rect x="668" y="356" width="7" height="1" fill="#ffff00"/>
<rect x="669" y="357" width="5" height="1" fill="#ffff00"/>
<rect x="670" y="358" width="3" height="1" fill="#ffff00"/>
<rect x="669" y="359" width="5" height="1" fill="#ffff00"/>
<rect x="668" y="360" width="7" height="1" fill="#ffff00"/>
<rect x="669" y="361" width="1" height="1" fill="#ffff00"/>
<rect x="673" y="361" width="1" height="1" fill="#ffff00"/>
<rect x="669" y="611" width="1" height="1" fill="#ffff00"/>
<rect x="673" y="611" width="1" height="1" fill="#ffff00"/>
<rect x="668" y="612" width="7" height="1" fill="#ffff00"/>
<rect x="669" y="613" width="5" height="1" fill="#ffff00"/>
<rect x="670" y="614" width="3" height="1" fill="#ffff00"/>
<rect x="669" y="615" width="5" height="1" fill="#ffff00"/>
<rect x="668" y="616" width="7" height="1" fill="#ffff00"/>
<rect x="669" y="617" width="1" height="1" fill="#ffff00"/>
<rect x="673" y="617" width="1" height="1" fill="#ffff00"/>
<rect x="677" y="358" width="1" height="1" fill="#ffff00"/>
<rect x="681" y="358" width="1" height="1" fill="#ffff00"/>
<rect x="676" y="359" width="7" height="1" fill="#ffff00"/>
<rect x="677" y="360" width="5" height="1" fill="#ffff00"/>
<rect x="678" y="361" width="3" height="1" fill="#ffff00"/>
<rect x="677" y="362" width="5" height="1" fill="#ffff00"/>
<rect x="676" y="363" width="7" height="1" fill="#ffff00"/>
<rect x="677" y="364" width="1" height="1" fill="#ffff00"/>
<rect x="681" y="364" width="1" height="1" fill="#ffff00"/>
<rect x="677" y="613" width="1" height="1" fill="#ffff00"/>
<rect x="681" y="613" width="1" height="1" fill="#ffff00"/>
<rect x="676" y="614" width="7" height="1" fill="#ffff00"/>
<rect x="677" y="615" width="5" height="1" fill="#ffff00"/>
<rect x="678" y="616" width="3" height="1" fill="#ffff00"/>
<rect x="677" y="617" width="5" height="1" fill="#ffff00"/>
<rect x="676" y="618" width="7" height="1" fill="#ffff00"/>
<rect x="677" y="619" width="1" height="1" fill="#ffff00"/>
<rect x="681" y="619" width="1" height="1" fill="#ffff00"/>
<rect x="975" y="233" width="1" height="1" fill="#ffff00"/>
<rect x="979" y="233" width="1" height="1" fill="#ffff00"/>
<rect x="974" y="234" width="7" height="1" fill="#ffff00"/>
<rect x="975" y="235" width="5" height="1" fill="#ffff00"/>
<rect x="976" y="236" width="3" height="1" fill="#ffff00"/>
<rect x="975" y="237" width="5" height="1" fill="#ffff00"/>
<rect x="974" y="238" width="7" height="1" fill="#ffff00"/>
<rect x="975" y="239" width="1" height="1" fill="#ffff00"/>
<rect x="979" y="239" width="1" height="1" fill="#ffff00"/>
<rect x="975" y="535" width="1" height="1" fill="#ffff00"/>
<rect x="979" y="535" width="1" height="1" fill="#ffff00"/>
<rect x="974" y="536" width="7" height="1" fill="#ffff00"/>
<rect x="975" y="537" width="5" height="1" fill="#ffff00"/>
<rect x="976" y="538" width="3" height="1" fill="#ffff00"/>
<rect x="975" y="539" width="5" height="1" fill="#ffff00"/>
<rect x="974" y="540" width="7" height="1" fill="#ffff00"/>
<rect x="975" y="541" width="1" height="1" fill="#ffff00"/>
<rect x="979" y="541" width="1" height="1" fill="#ffff00"/>
<rect x="323" y="74" width="1" height="1" fill="#00ff00"/>
<rect x="327" y="74" width="1" height="1" fill="#00ff00"/>
<rect x="322" y="75" width="7" height="1" fill="#00ff00"/>
<rect x="323" y="76" width="5" height="1" fill="#00ff00"/>
<rect x="324" y="77" width="3" height="1" fill="#00ff00"/>
<rect x="323" y="78" width="5" height="1" fill="#00ff00"/>
<rect x="322" y="79" width="7" height="1" fill="#00ff00"/>
<rect x="323" y="80" width="1" height="1" fill="#00ff00"/>
<rect x="327" y="80" width="1" height="1" fill="#00ff00"/>
<rect x="323" y="436" width="1" height="1" fill="#00ff00"/>
<rect x="327" y="436" width="1" height="1" fill="#00ff00"/>
<rect x="322" y="437" width="7" height="1" fill="#00ff00"/>
<rect x="323" y="438" width="5" height="1" fill="#00ff00"/>
<rect x="324" y="439" width="3" height="1" fill="#00ff00"/>
<rect x="323" y="440" width="5" height="1" fill="#00ff00"/>
<rect x="322" y="441" width="7" height="1" fill="#00ff00"/>
<rect x="323" y="442" width="1" height="1" fill="#00ff00"/>
<rect x="327" y="442" width="1" height="1" fill="#00ff00"/>
<rect x="524" y="208" width="1" height="1" fill="#00ff00"/>
<rect x="528" y="208" width="1" height="1" fill="#00ff00"/>
<rect x="523" y="209" width="7" height="1" fill="#00ff00"/>
<rect x="524" y="210" width="5" height="1" fill="#00ff00"/>
<rect x="525" y="211" width="3" height="1" fill="#00ff00"/>
<rect x="524" y="212" width="5" height="1" fill="#00ff00"/>
<rect x="523" y="213" width="7" height="1" fill="#00ff00"/>
<rect x="524" y="214" width="1" height="1" fill="#00ff00"/>
<rect x="528" y="214" width="1" height="1" fill="#00ff00"/>
<rect x="524" y="520" width="1" height="1" fill="#00ff00"/>
<rect x="528" y="520" width="1" height="1" fill="#00ff00"/>
<rect x="523" y="521" width="7" height="1" fill="#00ff00"/>
<rect x="524" y="522" width="5" height="1" fill="#00ff00"/>
<rect x="525" y="523" width="3" height="1" fill="#00ff00"/>
<rect x="524" y="524" width="5" height="1" fill="#00ff00"/>
<rect x="523" y="525" width="7" height="1" fill="#00ff00"/>
<rect x="524" y="526" width="1" height="1" fill="#00ff00"/>
<rect x="528" y="526" width="1" height="1" fill="#00ff00"/>
<rect x="959" y="123" width="1" height="1" fill="#00ff00"/>
<rect x="963" y="123" width="1" height="1" fill="#00ff00"/>
<rect x="958" y="124" width="7" height="1" fill="#00ff00"/>
<rect x="959" y="125" width="5" height="1" fill="#00ff00"/>
<rect x="960" y="126" width="3" height="1" fill="#00ff00"/>
<rect x="959" y="127" width="5" height="1" fill="#00ff00"/>
<rect x="958" y="128" width="7" height="1" fill="#00ff00"/>
<rect x="959" y="129" width="1" height="1" fill="#00ff00"/>
<rect x="963" y="129" width="1" height="1" fill="#00ff00"/>
<rect x="959" y="467" width="1" height="1" fill="#00ff00"/>
<rect x="963" y="467" width="1" height="1" fill="#00ff00"/>
<rect x="958" y="468" width="7" height="1" fill="#00ff00"/>
<rect x="959" y="469" width="5" height="1" fill="#00ff00"/>
<rect x="960" y="470" width="3" height="1" fill="#00ff00"/>
<rect x="959" y="471" width="5" height="1" fill="#00ff00"/>
<rect x="958" y="472" width="7" height="1" fill="#00ff00"/>
<rect x="959" y="473" width="1" height="1" fill="#00ff00"/>
<rect x="963" y="473" width="1" height="1" fill="#00ff00"/>
<rect x="991" y="91" width="1" height="1" fill="#00ff00"/>
<rect x="995" y="91" width="1" height="1" fill="#00ff00"/>
<rect x="990" y="92" width="7" height="1" fill="#00ff00"/>
<rect x="991" y="93" width="5" height="1" fill="#00ff00"/>
<rect x="992" y="94" width="3" height="1" fill="#00ff00"/>
<rect x="991" y="95" width="5" height="1" fill="#00ff00"/>
<rect x="990" y="96" width="7" height="1" fill="#00ff00"/>
<rect x="991" y="97" width="1" height="1" fill="#00ff00"/>
<rect x="995" y="97" width="1" height="1" fill="#00ff00"/>
<rect x="991" y="447" width="1" height="1" fill="#00ff00"/>
<rect x="995" y="447" width="1" height="1" fill="#00ff00"/>
<rect x="990" y="448" width="7" height="1" fill="#00ff00"/>
<rect x="991" y="449" width="5" height="1" fill="#00ff00"/>
<rect x="992" y="450" width="3" height="1" fill="#00ff00"/>
<rect x="991" y="451" width="5" height="1" fill="#00ff00"/>
<rect x="990" y="452" width="7" height="1" fill="#00ff00"/>
<rect x="991" y="453" width="1" height="1" fill="#00ff00"/>
<rect x="995" y="453" width="1" height="1" fill="#00ff00"/>
<rect x="1072" y="485" width="48" height="15" fill="#000080"/>
<rect x="1072" y="484" width="48" height="1" fill="#c00000"/>
<rect x="1072" y="500" width="48" height="1" fill="#c00000"/>
<rect x="588" y="631" width="78" height="15" fill="#000080"/>
<rect x="978" y="600" width="152" height="50" fill="#000"/>
<g shape-rendering="geometricPrecision">
<rect x="5.5" y="4.5" width="11" height="9" rx="2" fill="none" stroke="#909090"/><rect x="11" y="6" width="4" height="6" fill="#d0d0d0"/>
<circle cx="134" cy="29.5" r="6" fill="#808080"/><path d="M130.5 28.3 l3.5 3.5 l3.5 -3.5" fill="none" stroke="#101010" stroke-width="1.5"/>
<circle cx="8" cy="405" r="6" fill="#808080"/><path d="M4.5 403.8 l3.5 3.5 l3.5 -3.5" fill="none" stroke="#101010" stroke-width="1.5"/>
<path d="M1042.5 24 L1048 29.5 L1042.5 35 L1037 29.5 Z" fill="none" stroke="#909090"/>
<rect x="1055.5" y="24.5" width="11" height="10" rx="2" fill="none" stroke="#909090"/><rect x="1062" y="26" width="4" height="7" fill="#909090"/>
</g>
</svg>
<svg width="0" height="0" style="position:absolute"><filter id="thr" x="0" y="0" width="100%" height="100%" color-interpolation-filters="sRGB"><feComponentTransfer><feFuncA type="discrete" tableValues="0 0 0 0 0 0 0 0 0 1 1 1 1 1 1 1 1 1 1 1"/></feComponentTransfer></filter><filter id="thr2" x="0" y="0" width="100%" height="100%" color-interpolation-filters="sRGB"><feComponentTransfer><feFuncA type="discrete" tableValues="0 0 1 1 1"/></feComponentTransfer></filter></svg>
<div id="txt">
<div class="t" style="left:1px;top:615px;color:#808080">用到未来数据</div>
<div id="sym">
<div class="t" style="left:12px;top:366.5px;color:#ff0000">低吸</div>
<div class="t" style="left:12px;top:616.697px;color:#ff0000">低吸</div>
<div class="t" style="left:478px;top:310.1px;color:#ff0000">低吸</div>
<div class="t" style="left:478px;top:581.571px;color:#ff0000">低吸</div>
<div class="t" style="left:671px;top:351.9px;color:#ff0000">低吸</div>
<div class="t" style="left:671px;top:607.604px;color:#ff0000">低吸</div>
<div class="t" style="left:679px;top:354.9px;color:#ff0000">低吸</div>
<div class="t" style="left:679px;top:609.473px;color:#ff0000">低吸</div>
<div class="t" style="left:977px;top:230.1px;color:#ff0000">低吸</div>
<div class="t" style="left:977px;top:531.747px;color:#ff0000">低吸</div>
<div class="t" style="left:324px;top:59px;color:#00ff00">高抛</div>
<div class="t" style="left:324px;top:425.922px;color:#00ff00">高抛</div>
<div class="t" style="left:525px;top:195.3px;color:#00ff00">高抛</div>
<div class="t" style="left:525px;top:509.253px;color:#00ff00">高抛</div>
<div class="t" style="left:960px;top:109px;color:#00ff00">高抛</div>
<div class="t" style="left:960px;top:456.439px;color:#00ff00">高抛</div>
<div class="t" style="left:992px;top:77.1px;color:#00ff00">高抛</div>
<div class="t" style="left:992px;top:436.509px;color:#00ff00">高抛</div>
</div>
<div class="t" style="left:27.5px;top:3px;color:#c0c0c0;font-size:12px;">分时</div>
<div class="t" style="left:62px;top:3px;color:#c0c0c0;font-size:12px;">1分钟</div>
<div class="t" style="left:101px;top:3px;color:#c0c0c0;font-size:12px;">5分钟</div>
<div class="t" style="left:140px;top:3px;color:#c0c0c0;font-size:12px;">15分钟</div>
<div class="t" style="left:186px;top:3px;color:#c0c0c0;font-size:12px;">30分钟</div>
<div class="t" style="left:232px;top:3px;color:#c0c0c0;font-size:12px;">60分钟</div>
<div class="t" style="left:278px;top:3px;color:#30e0ff;font-size:12px;">日线</div>
<div class="t" style="left:312px;top:3px;color:#c0c0c0;font-size:12px;">周线</div>
<div class="t" style="left:346.5px;top:3px;color:#c0c0c0;font-size:12px;">月线</div>
<div class="t" style="left:378.5px;top:3px;color:#c0c0c0;font-size:12px;">多周期</div>
<div class="t" style="left:422.5px;top:3px;color:#c0c0c0;font-size:12px;">更多</div>
<div class="t" style="left:450px;top:3px;color:#c0c0c0;font-size:12px;">&gt;</div>
<div class="t" style="left:811px;top:3px;color:#c0c0c0;font-size:12px;">复权</div>
<div class="t" style="left:846px;top:3px;color:#c0c0c0;font-size:12px;">叠加</div>
<div class="t" style="left:881px;top:3px;color:#c0c0c0;font-size:12px;">多股</div>
<div class="t" style="left:916px;top:3px;color:#c0c0c0;font-size:12px;">统计</div>
<div class="t" style="left:950.5px;top:3px;color:#c0c0c0;font-size:12px;">画线</div>
<div class="t" style="left:987px;top:3px;color:#c0c0c0;font-size:12px;">F10</div>
<div class="t" style="left:1020px;top:3px;color:#c0c0c0;font-size:12px;">标记</div>
<div class="t" style="left:1052.3px;top:3px;color:#c0c0c0;font-size:12px;">+</div>
<div class="t" style="left:1059px;top:3px;color:#c0c0c0;font-size:12px;">自选</div>
<div class="t" style="left:1091px;top:3px;color:#c0c0c0;font-size:12px;">返回</div>
<div class="t" style="left:2.5px;top:22px;color:#c0c0c0;font-size:12px;">滨江集团(日线.前复权)</div>
<div class="t" style="left:144.5px;top:22px;color:#e8e8e8;font-size:12px;">MA5: 11.72</div>
<div class="t" style="left:209.5px;top:22px;color:#ffff00;font-size:12px;">MA10: 11.71</div>
<div class="t" style="left:281.5px;top:22px;color:#ff00ff;font-size:12px;">MA20: 10.99</div>
<div class="t" style="left:353.5px;top:22px;color:#00ff00;font-size:12px;">MA60: 10.52</div>
<div class="t" style="left:425.5px;top:22px;color:#ff00ff;font-size:12px;">F: -</div>
<div class="t" style="left:446.5px;top:22px;color:#e8e8e8;font-size:12px;">年: 11.27</div>
<div class="t" style="left:17.5px;top:399px;color:#c0c0c0;font-size:12px;">股朋指标网</div>
<div class="t" style="left:83.5px;top:399px;color:#e8e8e8;font-size:12px;">MA1: 11.72</div>
<div class="t" style="left:149px;top:399px;color:#ffff00;font-size:12px;">MA2: 11.71</div>
<div class="t" style="left:214px;top:399px;color:#ff00ff;font-size:12px;">MA3: 10.99</div>
<div class="t" style="left:278.5px;top:399px;color:#00ff00;font-size:12px;">MA4: 10.52</div>
<div class="t" style="left:343.5px;top:399px;color:#ffff00;font-size:12px;">B: -</div>
<div class="t" style="left:366.5px;top:399px;color:#00ff00;font-size:12px;">S: -</div>
<div class="t" style="left:389.5px;top:399px;color:#ff00ff;font-size:12px;">F: -</div>
<div class="t" style="left:411px;top:399px;color:#e8e8e8;font-size:12px;">年: 11.27</div>
<div class="t ax" style="top:38.5px">13.00</div>
<div class="t ax" style="top:84.5px">12.50</div>
<div class="t ax" style="top:130.5px">12.00</div>
<div class="t ax" style="top:176.5px">11.50</div>
<div class="t ax" style="top:221.5px">11.00</div>
<div class="t ax" style="top:267.5px">10.50</div>
<div class="t ax" style="top:313.5px">10.00</div>
<div class="t ax" style="top:359.5px;left:1092.2px">9.50</div>
<div class="t ax" style="top:412.5px">13.00</div>
<div class="t ax" style="top:441.5px">12.50</div>
<div class="t ax" style="top:469.5px">12.00</div>
<div class="t ax" style="top:498.5px">11.50</div>
<div class="t ax" style="top:526.5px">11.00</div>
<div class="t ax" style="top:555.5px">10.50</div>
<div class="t ax" style="top:583.5px">10.00</div>
<div class="t" style="left:1072.5px;top:485px;color:#c8c8c8;font-size:12px;">11.58</div>
<div class="t" style="left:5px;top:631.5px;color:#ff3232;font-size:12px;">2025年</div>
<div class="t" style="left:149px;top:631.5px;color:#ff3232;font-size:12px;">9</div>
<div class="t" style="left:326px;top:631.5px;color:#ff3232;font-size:12px;">10</div>
<div class="t" style="left:463px;top:631.5px;color:#ff3232;font-size:12px;">11</div>
<div class="t" style="left:809px;top:631.5px;color:#ff3232;font-size:12px;">1</div>
<div class="t" style="left:970px;top:631.5px;color:#ff3232;font-size:12px;">2</div>
<div class="t" style="left:590px;top:631.5px;color:#d0d0d0;font-size:12px;">2025/11/25/二</div>
<div id="strip"><div class="t" style="left:1px;top:7.5px;color:#e0e0e0;font-size:16px;line-height:18px">委</div>
<div class="t" style="left:1px;top:28.2px;color:#e0e0e0;font-size:16px;line-height:18px">卖</div>
<div class="t" style="left:1px;top:47.44px;color:#e0e0e0;font-size:16px;line-height:18px">卖</div>
<div class="t" style="left:1px;top:66.68px;color:#e0e0e0;font-size:16px;line-height:18px">卖</div>
<div class="t" style="left:1px;top:85.92px;color:#e0e0e0;font-size:16px;line-height:18px">卖</div>
<div class="t" style="left:1px;top:105.16px;color:#e0e0e0;font-size:16px;line-height:18px">卖</div>
<div class="t" style="left:1px;top:124.4px;color:#e0e0e0;font-size:16px;line-height:18px">买</div>
<div class="t" style="left:1px;top:143.64px;color:#e0e0e0;font-size:16px;line-height:18px">买</div>
<div class="t" style="left:1px;top:162.88px;color:#e0e0e0;font-size:16px;line-height:18px">买</div>
<div class="t" style="left:1px;top:182.12px;color:#e0e0e0;font-size:16px;line-height:18px">买</div>
<div class="t" style="left:1px;top:201.36px;color:#e0e0e0;font-size:16px;line-height:18px">买</div>
<div class="t" style="left:1px;top:220.6px;color:#e0e0e0;font-size:16px;line-height:18px">现</div>
<div class="t" style="left:1px;top:240px;color:#e0e0e0;font-size:16px;line-height:18px">涨</div>
<div class="t" style="left:1px;top:259.4px;color:#e0e0e0;font-size:16px;line-height:18px">涨</div>
<div class="t" style="left:1px;top:278.8px;color:#e0e0e0;font-size:16px;line-height:18px">总</div>
<div class="t" style="left:1px;top:298.2px;color:#e0e0e0;font-size:16px;line-height:18px">外</div>
<div class="t" style="left:1px;top:318px;color:#e0e0e0;font-size:16px;line-height:18px">换</div>
<div class="t" style="left:1px;top:338.3px;color:#e0e0e0;font-size:16px;line-height:18px">净</div>
<div class="t" style="left:1px;top:358.6px;color:#e0e0e0;font-size:16px;line-height:18px">收</div>
<div class="t" style="left:1px;top:378.5px;color:#e0e000;font-size:16px;line-height:18px">自</div>
<div class="t" style="left:1px;top:400.5px;color:#e0e0e0;font-size:16px;line-height:18px">交</div>
<div class="t" style="left:2px;top:421.1px;color:#e0e0e0;font-size:13px;line-height:15px">1</div>
<div class="t" style="left:2px;top:438.76px;color:#e0e0e0;font-size:13px;line-height:15px">1</div>
<div class="t" style="left:2px;top:456.42px;color:#e0e0e0;font-size:13px;line-height:15px">1</div>
<div class="t" style="left:2px;top:474.08px;color:#e0e0e0;font-size:13px;line-height:15px">1</div>
<div class="t" style="left:2px;top:491.74px;color:#e0e0e0;font-size:13px;line-height:15px">1</div>
<div class="t" style="left:2px;top:509.4px;color:#e0e0e0;font-size:13px;line-height:15px">1</div>
<div class="t" style="left:2px;top:527.06px;color:#e0e0e0;font-size:13px;line-height:15px">1</div>
<div class="t" style="left:2px;top:544.72px;color:#e0e0e0;font-size:13px;line-height:15px">1</div>
<div class="t" style="left:2px;top:562.38px;color:#e0e0e0;font-size:13px;line-height:15px">1</div></div>
</div>
<div id="wm1">乐淘公式网</div>
<div id="wm2">www.60lt.com</div>
</body></html>
